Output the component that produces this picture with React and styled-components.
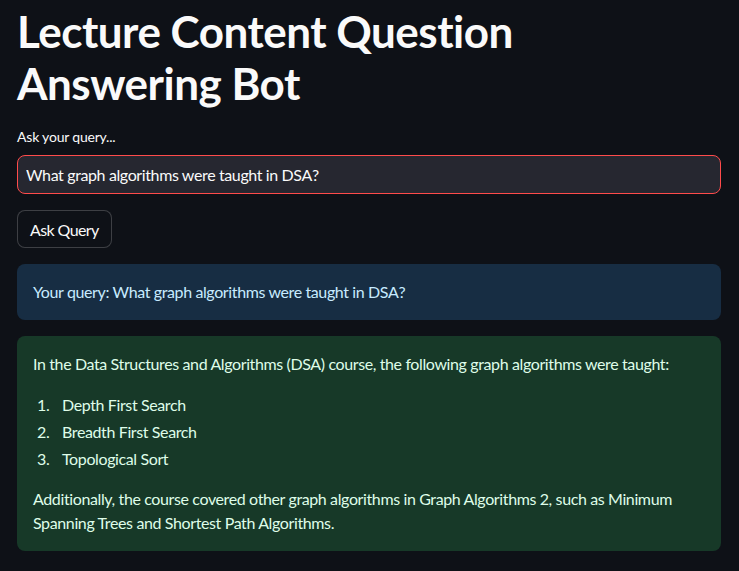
import React from 'react';
import styled, { createGlobalStyle } from 'styled-components';

const GlobalStyle = createGlobalStyle`
  html, body {
    margin: 0;
    padding: 0;
    background: #0e1117;
  }

  body {
    font-family: Lato, "Noto Sans", sans-serif;
    color: #fafafa;
    letter-spacing: -0.38px;
  }
`;

const Page = styled.main`
  display: flex;
  flex-direction: column;
  width: 704px;
  padding: 0 18px 20px 17px;
`;

const Title = styled.h1`
  margin: 0;
  padding: 5px 0 18px;
  font-size: 44px;
  font-weight: 700;
  line-height: 52px;
  letter-spacing: -0.5px;
  color: #fafafa;
`;

const Label = styled.label`
  display: block;
  margin-bottom: 8px;
  font-size: 14px;
  line-height: 20px;
  letter-spacing: -0.2px;
  color: #fafafa;
`;

const Input = styled.input`
  box-sizing: border-box;
  width: 100%;
  height: 39px;
  padding: 0 8px;
  border: 1px solid #ff4b4b;
  border-radius: 8px;
  background: #262730;
  color: #fafafa;
  font: inherit;
  font-size: 16px;
  letter-spacing: -0.38px;
  outline: none;
`;

const Button = styled.button`
  align-self: flex-start;
  margin-top: 16px;
  height: 38px;
  padding: 0 12px;
  border: 1px solid rgba(250, 250, 250, 0.2);
  border-radius: 8px;
  background: #0e1117;
  color: #fafafa;
  font: inherit;
  font-size: 16px;
  letter-spacing: -0.6px;
`;

const Alert = styled.div`
  margin-top: 16px;
  padding: 16px;
  border-radius: 8px;
  background: ${({ kind }) => (kind === 'success' ? '#173928' : '#172d43')};
  color: ${({ kind }) => (kind === 'success' ? '#dffde9' : '#c7ebff')};
  font-size: 16px;
  line-height: 24px;

  p {
    margin: 0;
  }
`;

const List = styled.ol`
  margin: 17px 0 16px;
  padding: 0;
  list-style: none;
  counter-reset: item;

  li {
    display: flex;
    counter-increment: item;
  }

  li + li {
    margin-top: 3px;
  }

  li::before {
    content: counter(item) '.';
    box-sizing: border-box;
    flex: 0 0 29px;
    padding-left: 4px;
  }
`;

export default function App() {
  return (
    <>
      <GlobalStyle />
      <Page>
        <Title>Lecture Content Question Answering Bot</Title>

        <Label htmlFor="query">Ask your query...</Label>
        <Input id="query" defaultValue="What graph algorithms were taught in DSA?" />

        <Button>Ask Query</Button>

        <Alert kind="info">
          <p>Your query: What graph algorithms were taught in DSA?</p>
        </Alert>

        <Alert kind="success">
          <p>In the Data Structures and Algorithms (DSA) course, the following graph algorithms were taught:</p>
          <List>
            <li>Depth First Search</li>
            <li>Breadth First Search</li>
            <li>Topological Sort</li>
          </List>
          <p>
            Additionally, the course covered other graph algorithms in Graph Algorithms 2, such as Minimum
            Spanning Trees and Shortest Path Algorithms.
          </p>
        </Alert>
      </Page>
    </>
  );
}
